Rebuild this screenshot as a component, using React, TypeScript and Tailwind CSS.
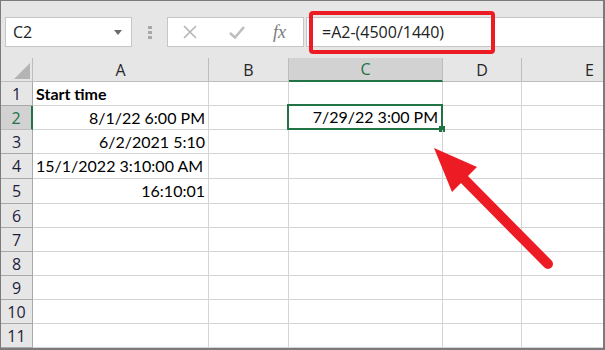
const cols = ['A', 'B', 'C', 'D', 'E']

type Row = { n: number; a?: string; bold?: boolean; left?: boolean; c?: string; h: string }

const rows: Row[] = [
  { n: 1, a: 'Start time', bold: true, left: true, h: 'h-[24px]' },
  { n: 2, a: '8/1/22 6:00 PM', c: '7/29/22 3:00 PM', h: 'h-[24px]' },
  { n: 3, a: '6/2/2021 5:10', h: 'h-[24px]' },
  { n: 4, a: '15/1/2022 3:10:00 AM', left: true, h: 'h-[25px]' },
  { n: 5, a: '16:10:01', h: 'h-[25px]' },
  { n: 6, h: 'h-[24px]' },
  { n: 7, h: 'h-[24px]' },
  { n: 8, h: 'h-[24px]' },
  { n: 9, h: 'h-[24px]' },
  { n: 10, h: 'h-[24px]' },
  { n: 11, h: 'h-[24px]' },
]

const headFont = { fontFamily: '"Open Sans", "Noto Sans", sans-serif' }
const cellFont = { fontFamily: 'Lato, "Liberation Sans", sans-serif' }

function Toolbar() {
  return (
    <div className="flex h-[57px] items-start bg-[#e6e6e6] pt-[16px]" style={headFont}>
      <div className="ml-[4px] flex h-[30px] w-[127px] items-center justify-between border border-[#c6c6c6] bg-white pl-[7px] pr-[9px]">
        <span className="text-[16px] text-[#222]">C2</span>
        <svg width="8" height="5" viewBox="0 0 8 5">
          <path d="M0 0h8L4 5z" fill="#6b6b6b" />
        </svg>
      </div>
      <div className="ml-[16px] mt-[9px] flex flex-col gap-[2px]">
        <span className="h-[3px] w-[4px] bg-[#a8a8a8]" />
        <span className="h-[3px] w-[4px] bg-[#a8a8a8]" />
        <span className="h-[3px] w-[4px] bg-[#a8a8a8]" />
      </div>
      <div className="ml-[15px] flex h-[30px] w-[137px] items-center border border-[#c6c6c6] bg-white">
        <svg className="ml-[14px]" width="16" height="16" viewBox="0 0 16 16">
          <path d="M2 2l12 12M14 2L2 14" stroke="#b5b5b5" strokeWidth="1.6" />
        </svg>
        <svg className="ml-[30px]" width="18" height="16" viewBox="0 0 18 16">
          <path d="M2 9l5 4.5L16 3" stroke="#bdbdbd" strokeWidth="2.6" fill="none" />
        </svg>
        <span
          className="ml-[27px] text-[18px] italic text-[#7a7a7a]"
          style={{ fontFamily: '"Liberation Serif", serif' }}
        >
          fx
        </span>
      </div>
      <div className="ml-[2px] flex h-[30px] flex-1 items-center border-y border-l border-[#c6c6c6] bg-white pl-[15px]">
        <span className="text-[16px] text-[#222]">=A2-(4500/1440)</span>
      </div>
    </div>
  )
}

function Sheet() {
  return (
    <div className="grid grid-cols-[32px_176px_80px_154px_79px_1fr]">
      <div className="relative h-[24px] border-r border-b border-[#bdbdbd] bg-[#e6e6e6]">
        <svg className="absolute right-[2px] bottom-[2px]" width="16" height="16" viewBox="0 0 16 16">
          <path d="M16 0v16H0z" fill="#b4b4b4" />
        </svg>
      </div>
      {cols.map((c) =>
        c === 'C' ? (
          <div
            key={c}
            className="flex h-[24px] items-center justify-center border-r border-b-2 border-r-[#bdbdbd] border-b-[#217346] bg-[#d2d2d2] text-[16px] text-[#217346]"
            style={headFont}
          >
            {c}
          </div>
        ) : c === 'E' ? (
          <div
            key={c}
            className="flex h-[24px] items-center border-b border-[#bdbdbd] bg-[#e6e6e6] pl-[63px] text-[16px] text-[#262626]"
            style={headFont}
          >
            {c}
          </div>
        ) : (
          <div
            key={c}
            className="flex h-[24px] items-center justify-center border-r border-b border-[#bdbdbd] bg-[#e6e6e6] text-[16px] text-[#262626]"
            style={headFont}
          >
            {c}
          </div>
        ),
      )}
      {rows.map((r) => (
        <RowCells key={r.n} r={r} />
      ))}
    </div>
  )
}

function RowCells({ r }: { r: Row }) {
  const sel = r.n === 2
  return (
    <>
      <div
        className={
          sel
            ? `${r.h} flex items-center justify-center border-b border-r-2 border-b-[#bdbdbd] border-r-[#217346] bg-[#d2d2d2] text-[16px] text-[#217346]`
            : `${r.h} flex items-center justify-center border-r border-b border-[#a9a9a9] bg-[#e6e6e6] text-[16px] text-[#1e1e3c]`
        }
        style={headFont}
      >
        {r.n}
      </div>
      <div
        className={`${r.h} flex items-center whitespace-nowrap border-r border-b border-[#d4d4d4] text-[16px] text-black ${
          r.left ? 'justify-start pl-[3px]' : 'justify-end pr-[3px]'
        } ${r.bold ? 'font-bold' : ''}`}
        style={cellFont}
      >
        {r.a}
      </div>
      <div className={`${r.h} border-r border-b border-[#d4d4d4]`} />
      <div className={`${r.h} relative border-r border-b border-[#d4d4d4]`}>
        {sel && (
          <>
            <div
              className="absolute -top-[2px] -left-[2px] -right-[1px] -bottom-[1px] flex items-center justify-end border-2 border-[#217346] pr-[3px] text-[16px] text-black"
              style={cellFont}
            >
              {r.c}
            </div>
            <div className="absolute -right-[3px] -bottom-[3px] h-[6px] w-[6px] bg-[#217346]" />
          </>
        )}
      </div>
      <div className={`${r.h} border-r border-b border-[#d4d4d4]`} />
      <div className={`${r.h} border-b border-[#d4d4d4]`} />
    </>
  )
}

export default function App() {
  return (
    <div className="relative h-[350px] w-[605px] overflow-hidden border-t border-l border-r-2 border-b-2 border-[#7b7b7b] bg-white">
      <Toolbar />
      <Sheet />
      <div className="absolute top-[10px] left-[308px] h-[43px] w-[186px] rounded-[4px] border-4 border-[#ed1c24]" />
      <svg className="absolute top-0 left-0" width="605" height="350" viewBox="0 0 605 350">
        <path d="M460 175L547 263" stroke="#ed1c24" strokeWidth="10" strokeLinecap="round" />
        <path d="M433 147L476 166L451 191z" fill="#ed1c24" />
      </svg>
    </div>
  )
}
